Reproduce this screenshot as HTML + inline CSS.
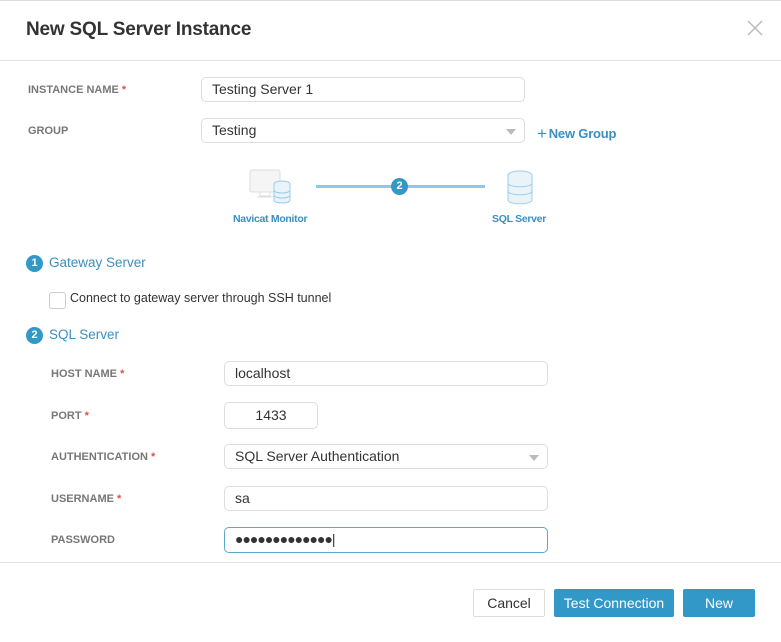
<!DOCTYPE html>
<html><head><style>
body{margin:0;width:781px;height:642px;background:#fff;font-family:"Liberation Sans",Arial,sans-serif;position:relative;overflow:hidden}
.a{position:absolute}
.lbl{font-size:11px;font-weight:bold;color:#777;}
.lbl i{color:#d9534f;font-style:normal}
.in{position:absolute;border:1px solid #ddd;border-radius:5px;height:25px;box-sizing:border-box;font-size:14px;color:#333;padding:4px 10px;line-height:15px}
.caret{position:absolute;right:8px;top:10px;width:0;height:0;border-left:5px solid transparent;border-right:5px solid transparent;border-top:6px solid #bbb}
.num{position:absolute;width:17px;height:17px;border-radius:50%;background:#3298c8;color:#fff;font-size:11px;font-weight:bold;text-align:center;line-height:17px}
.h{font-size:13.5px;color:#3a8fc0}
.btn{position:absolute;height:28px;top:589px;box-sizing:border-box;font-size:14px;text-align:center;line-height:28px;border-radius:2px}
</style></head><body>
<div class="a" style="left:0;top:0;width:781px;height:1px;background:#ddd"></div>
<div class="a" style="left:26px;top:19px;font-size:19px;font-weight:bold;color:#333;letter-spacing:-0.2px">New SQL Server Instance</div>
<svg class="a" style="left:747px;top:20px" width="16" height="16"><path d="M1 1L15 15M15 1L1 15" stroke="#bbb" stroke-width="1.5"/></svg>
<div class="a" style="left:0;top:60px;width:781px;height:1px;background:#e3e3e3"></div>

<div class="a lbl" style="left:28px;top:84px">INSTANCE NAME <i>*</i></div>
<div class="in" style="left:201px;top:77px;width:324px">Testing Server 1</div>
<div class="a lbl" style="left:28px;top:125px">GROUP</div>
<div class="in" style="left:201px;top:118px;width:324px">Testing<span class="caret"></span></div>
<div class="a" style="left:537px;top:123px;font-size:13px;color:#3a8fc0;font-weight:bold;letter-spacing:-0.2px"><span style="font-size:17px;font-weight:normal;position:relative;top:1px;margin-right:2px">+</span>New Group</div>

<svg class="a" style="left:248px;top:168px" width="45" height="40">
<rect x="2" y="2" width="30" height="22" rx="2" fill="#f5f5f5" stroke="#ddd"/>
<path d="M12 24v4h10v-4M9 29h16" stroke="#ddd" fill="none"/>
<g fill="#e8f3fa" stroke="#9cccea"><ellipse cx="34" cy="16" rx="8" ry="3"/><path d="M26 16v16c0 4 16 4 16 0V16"/><path d="M26 22c0 4 16 4 16 0M26 27c0 4 16 4 16 0" fill="none"/></g>
</svg>
<div class="a" style="left:316px;top:185px;width:169px;height:3px;background:#8cc9e8"></div>
<div class="num" style="left:391px;top:178px">2</div>
<svg class="a" style="left:505px;top:169px" width="30" height="38">
<g fill="#e8f3fa" stroke="#9cccea"><ellipse cx="15" cy="6" rx="12" ry="4"/><path d="M3 6v25c0 5 24 5 24 0V6"/><path d="M3 14c0 5 24 5 24 0M3 22c0 5 24 5 24 0" fill="none"/></g>
</svg>
<div class="a" style="left:233px;top:213px;font-size:10.5px;color:#3a8fc0;font-weight:bold;letter-spacing:-0.3px">Navicat Monitor</div>
<div class="a" style="left:492px;top:213px;font-size:10.5px;color:#3a8fc0;font-weight:bold;letter-spacing:-0.3px">SQL Server</div>

<div class="num" style="left:26px;top:255px">1</div>
<div class="a h" style="left:49px;top:255px">Gateway Server</div>
<div class="a" style="left:49px;top:292px;width:15px;height:15px;border:1px solid #ccc;border-radius:3px"></div>
<div class="a" style="left:70px;top:291px;font-size:12.5px;color:#333">Connect to gateway server through SSH tunnel</div>
<div class="num" style="left:26px;top:327px">2</div>
<div class="a h" style="left:49px;top:327px">SQL Server</div>

<div class="a lbl" style="left:51px;top:368px">HOST NAME <i>*</i></div>
<div class="in" style="left:224px;top:361px;width:324px">localhost</div>
<div class="a lbl" style="left:51px;top:410px">PORT <i>*</i></div>
<div class="in" style="left:224px;top:402px;width:94px;text-align:center;height:27px;padding-top:5px">1433</div>
<div class="a lbl" style="left:51px;top:451px">AUTHENTICATION <i>*</i></div>
<div class="in" style="left:224px;top:444px;width:324px">SQL Server Authentication<span class="caret"></span></div>
<div class="a lbl" style="left:51px;top:493px">USERNAME <i>*</i></div>
<div class="in" style="left:224px;top:486px;width:324px">sa</div>
<div class="a lbl" style="left:51px;top:534px">PASSWORD</div>
<div class="in" style="left:224px;top:527px;width:324px;height:26px;border-color:#5ba7cf;letter-spacing:-1px">●●●●●●●●●●●●●|</div>

<div class="a" style="left:0;top:562px;width:781px;height:1px;background:#e3e3e3"></div>
<div class="btn" style="left:473px;width:72px;border:1px solid #ddd;color:#333;line-height:26px">Cancel</div>
<div class="btn" style="left:554px;width:120px;background:#3298c8;color:#fff">Test Connection</div>
<div class="btn" style="left:683px;width:72px;background:#3298c8;color:#fff">New</div>
</body></html>
